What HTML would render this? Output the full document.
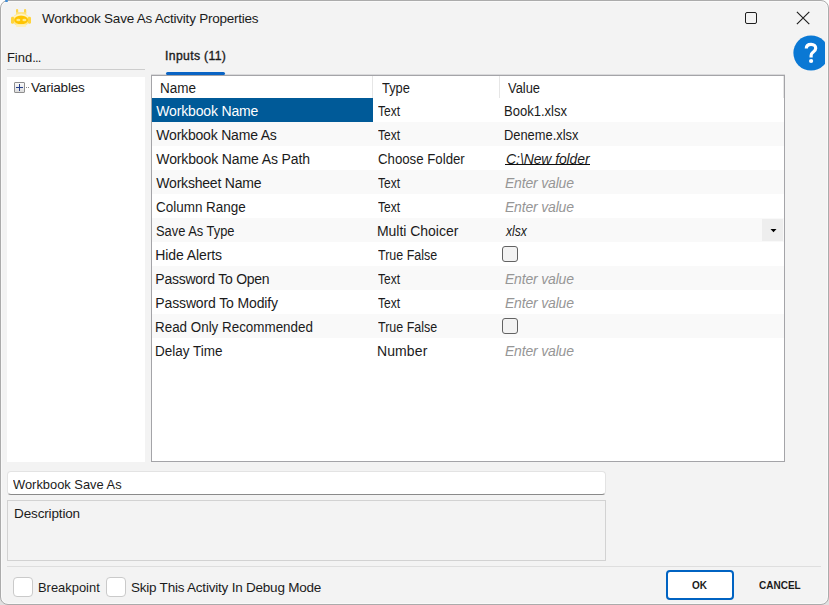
<!DOCTYPE html>
<html><head><meta charset="utf-8"><style>
html,body{margin:0;padding:0;}
body{width:829px;height:605px;position:relative;overflow:hidden;background:linear-gradient(#fdfdfd 50%,#e0e0e0 50%);font-family:"Liberation Sans", sans-serif;}
.win{position:absolute;left:0;top:0;width:827px;height:603px;border:1px solid #ababab;border-radius:8px;background:#f3f3f3;box-shadow:inset 0 0 0 1px #f9f9f9;overflow:hidden;}
.a{position:absolute;}
.t{position:absolute;white-space:pre;line-height:16px;font-family:"Liberation Sans", sans-serif;}
.row{position:absolute;left:152px;width:632px;height:24px;}
</style></head><body>
<div class="win"></div>
<div class="a" style="left:5px;top:0px;width:3px;height:2px;border-radius:1px;background:#3a8ad6"></div>
<!-- app icon -->
<svg class="a" style="left:10px;top:8px" width="22" height="21" viewBox="0 0 22 21">
  <rect x="6" y="1" width="2.2" height="5" rx="1.1" fill="#ffd64a"/>
  <rect x="14" y="1" width="2.2" height="5" rx="1.1" fill="#ffd64a"/>
  <rect x="6" y="4.2" width="10.2" height="2.6" fill="#ffe27a"/>
  <ellipse cx="11" cy="11.8" rx="8.6" ry="6.8" fill="#ffe685"/>
  <path d="M3.6 9.2 Q11 3.8 18.4 9.2" stroke="#fff4c4" stroke-width="1.3" fill="none"/>
  <rect x="1" y="8.8" width="3" height="7" rx="1.4" fill="#ffd43c"/>
  <rect x="18" y="8.8" width="3" height="7" rx="1.4" fill="#ffd43c"/>
  <ellipse cx="11.1" cy="12" rx="7" ry="4.3" fill="#ffc400"/>
  <ellipse cx="8.3" cy="12" rx="2" ry="1.3" fill="#ffea8c"/>
  <ellipse cx="14.4" cy="12" rx="2" ry="1.3" fill="#ffea8c"/>
  <rect x="6" y="16.2" width="10.2" height="2.8" rx="1" fill="#fff0b8"/>
</svg>
<!-- maximize -->
<div class="a" style="left:745px;top:12px;width:10px;height:10px;border:1.3px solid #1e1e1e;border-radius:2px;"></div>
<!-- close -->
<svg class="a" style="left:790px;top:5px" width="26" height="26" viewBox="0 0 26 26"><path d="M6.9 6.8 L19.3 19.2 M19.3 6.8 L6.9 19.2" stroke="#1e1e1e" stroke-width="1.15"/></svg>
<!-- help -->
<div class="a" style="left:793px;top:35px;width:32px;height:36px;overflow:hidden;">
<svg width="36" height="36" viewBox="0 0 36 36"><circle cx="18" cy="18" r="17.6" fill="#0a78d4"/>
<path d="M13.3 13.6 C13.3 10.6 15.4 9.3 18.1 9.3 C21 9.3 22.7 11.1 22.7 13.3 C22.7 15.6 21.1 16.5 19.7 17.5 C18.5 18.4 18.1 19.2 18.1 20.8 L18.1 22.4" stroke="#fff" stroke-width="3.2" fill="none"/>
<circle cx="18.1" cy="26" r="2.1" fill="#fff"/></svg></div>

<!-- left panel -->
<div class="a" style="left:7px;top:69px;width:138px;height:1px;background:#cdcdcd"></div>
<div class="a" style="left:7px;top:77px;width:138px;height:385px;background:#ffffff"></div>
<div class="a" style="left:14px;top:82px;width:9px;height:9px;border:1px solid #8f8f8f;border-radius:1px;background:linear-gradient(#fafafa,#dcdcdc)"></div>
<div class="a" style="left:16px;top:87px;width:7px;height:1px;background:#27408b"></div>
<div class="a" style="left:19px;top:84px;width:1px;height:7px;background:#27408b"></div>
<div class="a" style="left:26px;top:87px;width:1px;height:1px;background:#888"></div>
<div class="a" style="left:28px;top:87px;width:1px;height:1px;background:#888"></div>

<div class="a" style="left:151px;top:74px;width:634px;height:1px;background:#d9d9db"></div>
<!-- tab underline -->
<div class="a" style="left:166px;top:72px;width:59px;height:3px;border-radius:1.5px;background:#0a64c4"></div>

<!-- grid -->
<div class="a" style="left:151px;top:75px;width:632px;height:385px;border:1px solid #a4a4a8;background:#fff"></div>
<div class="a" style="left:372px;top:76px;width:1px;height:22px;background:#e6e6e6"></div>
<div class="a" style="left:499px;top:76px;width:1px;height:22px;background:#e6e6e6"></div>
<div class="a" style="left:783px;top:76px;width:1px;height:22px;background:#e6e6e6"></div>
<div class="row" style="top:98px;background:#ffffff"></div><div class="row" style="top:122px;background:#f9f9f9"></div><div class="row" style="top:146px;background:#ffffff"></div><div class="row" style="top:170px;background:#f9f9f9"></div><div class="row" style="top:194px;background:#ffffff"></div><div class="row" style="top:218px;background:#f9f9f9"></div><div class="row" style="top:242px;background:#ffffff"></div><div class="row" style="top:266px;background:#f9f9f9"></div><div class="row" style="top:290px;background:#ffffff"></div><div class="row" style="top:314px;background:#f9f9f9"></div><div class="row" style="top:338px;background:#ffffff"></div>
<div class="a" style="left:152px;top:98px;width:221px;height:24px;background:#005a98"></div>
<div class="a" style="left:762px;top:219px;width:21px;height:22px;background:#eeeeee"></div>
<div class="a" style="left:505px;top:164px;width:85px;height:1px;background:#111"></div>
<svg class="a" style="left:768px;top:226px" width="10" height="8" viewBox="0 0 10 8"><path d="M2.5 3 L8.5 3 L5.5 6.2 Z" fill="#000"/></svg>
<div class="a" style="left:502px;top:246px;width:14px;height:14px;border:1.2px solid #626262;border-radius:3px;background:#f3f3f3"></div>
<div class="a" style="left:502px;top:318px;width:14px;height:14px;border:1.2px solid #626262;border-radius:3px;background:#f3f3f3"></div>

<!-- bottom -->
<div class="a" style="left:7px;top:471px;width:597px;height:22px;border:1px solid #e3e3e3;border-bottom-color:#8a8a8a;border-radius:4px;background:#fff"></div>
<div class="a" style="left:7px;top:500px;width:597px;height:59px;border:1px solid #d2d2d2;"></div>
<div class="a" style="left:7px;top:566px;width:814px;height:1px;background:#dedede"></div>
<div class="a" style="left:13px;top:577px;width:18px;height:18px;border:1px solid #cacaca;border-radius:4px;background:#fff"></div>
<div class="a" style="left:106px;top:577px;width:18px;height:18px;border:1px solid #cacaca;border-radius:4px;background:#fff"></div>
<div class="a" style="left:666px;top:570px;width:64px;height:26px;border:2px solid #0063c2;border-radius:4px;background:#fff"></div>

<div class="t" id="t0" style="left:41.90px;top:10.61px;font-size:13.5px;font-weight:normal;font-style:normal;color:#1b1b1b;letter-spacing:-0.232px;">Workbook Save As Activity Properties</div><div class="t" id="t1" style="left:6.90px;top:50.14px;font-size:13px;font-weight:normal;font-style:normal;color:#1b1b1b;letter-spacing:0.000px;">Find<span style="letter-spacing:-0.8px">...</span></div><div class="t" id="t2" style="left:31.00px;top:79.61px;font-size:13.5px;font-weight:normal;font-style:normal;color:#1b1b1b;letter-spacing:-0.178px;">Variables</div><div class="t" id="t3" style="left:165.10px;top:47.57px;font-size:12.2px;font-weight:normal;font-style:normal;color:#1b1b1b;letter-spacing:0.336px;-webkit-text-stroke:0.35px #1b1b1b;">Inputs (11)</div><div class="t" id="t4" style="left:159.50px;top:79.98px;font-size:14px;font-weight:normal;font-style:normal;color:#1b1b1b;letter-spacing:0.000px;transform:scaleX(0.9658);transform-origin:0 0;">Name</div><div class="t" id="t5" style="left:381.50px;top:79.98px;font-size:14px;font-weight:normal;font-style:normal;color:#1b1b1b;letter-spacing:0.000px;transform:scaleX(0.9185);transform-origin:0 0;">Type</div><div class="t" id="t6" style="left:508.30px;top:79.98px;font-size:14px;font-weight:normal;font-style:normal;color:#1b1b1b;letter-spacing:0.000px;transform:scaleX(0.9212);transform-origin:0 0;">Value</div><div class="t" id="t7" style="left:156.30px;top:102.78px;font-size:14px;font-weight:normal;font-style:normal;color:#ffffff;letter-spacing:-0.158px;">Workbook Name</div><div class="t" id="t8" style="left:377.90px;top:102.78px;font-size:14px;font-weight:normal;font-style:normal;color:#1b1b1b;letter-spacing:0.000px;transform:scaleX(0.8608);transform-origin:0 0;">Text</div><div class="t" id="t9" style="left:504.10px;top:102.78px;font-size:14px;font-weight:normal;font-style:normal;color:#1b1b1b;letter-spacing:0.000px;transform:scaleX(0.9312);transform-origin:0 0;">Book1.xlsx</div><div class="t" id="t10" style="left:156.30px;top:126.78px;font-size:14px;font-weight:normal;font-style:normal;color:#1b1b1b;letter-spacing:-0.198px;">Workbook Name As</div><div class="t" id="t11" style="left:377.90px;top:126.78px;font-size:14px;font-weight:normal;font-style:normal;color:#1b1b1b;letter-spacing:0.000px;transform:scaleX(0.8555);transform-origin:0 0;">Text</div><div class="t" id="t12" style="left:504.10px;top:126.78px;font-size:14px;font-weight:normal;font-style:normal;color:#1b1b1b;letter-spacing:0.000px;transform:scaleX(0.9193);transform-origin:0 0;">Deneme.xlsx</div><div class="t" id="t13" style="left:156.30px;top:150.78px;font-size:14px;font-weight:normal;font-style:normal;color:#1b1b1b;letter-spacing:-0.124px;">Workbook Name As Path</div><div class="t" id="t14" style="left:377.90px;top:150.78px;font-size:14px;font-weight:normal;font-style:normal;color:#1b1b1b;letter-spacing:0.000px;transform:scaleX(0.9449);transform-origin:0 0;">Choose Folder</div><div class="t" id="t15" style="left:506.10px;top:150.78px;font-size:14px;font-weight:normal;font-style:italic;color:#1b1b1b;letter-spacing:-0.106px;">C:\New folder</div><div class="t" id="t16" style="left:156.30px;top:174.78px;font-size:14px;font-weight:normal;font-style:normal;color:#1b1b1b;letter-spacing:-0.205px;">Worksheet Name</div><div class="t" id="t17" style="left:377.90px;top:174.78px;font-size:14px;font-weight:normal;font-style:normal;color:#1b1b1b;letter-spacing:0.000px;transform:scaleX(0.8555);transform-origin:0 0;">Text</div><div class="t" id="t18" style="left:504.90px;top:174.78px;font-size:14px;font-weight:normal;font-style:italic;color:#969696;letter-spacing:-0.170px;">Enter value</div><div class="t" id="t19" style="left:156.30px;top:198.78px;font-size:14px;font-weight:normal;font-style:normal;color:#1b1b1b;letter-spacing:0.000px;transform:scaleX(0.9615);transform-origin:0 0;">Column Range</div><div class="t" id="t20" style="left:377.90px;top:198.78px;font-size:14px;font-weight:normal;font-style:normal;color:#1b1b1b;letter-spacing:0.000px;transform:scaleX(0.8608);transform-origin:0 0;">Text</div><div class="t" id="t21" style="left:504.90px;top:198.78px;font-size:14px;font-weight:normal;font-style:italic;color:#969696;letter-spacing:-0.170px;">Enter value</div><div class="t" id="t22" style="left:156.30px;top:222.78px;font-size:14px;font-weight:normal;font-style:normal;color:#1b1b1b;letter-spacing:0.000px;transform:scaleX(0.9198);transform-origin:0 0;">Save As Type</div><div class="t" id="t23" style="left:376.90px;top:222.78px;font-size:14px;font-weight:normal;font-style:normal;color:#1b1b1b;letter-spacing:-0.021px;">Multi Choicer</div><div class="t" id="t24" style="left:505.90px;top:222.78px;font-size:14px;font-weight:normal;font-style:italic;color:#1b1b1b;letter-spacing:0.000px;transform:scaleX(0.8691);transform-origin:0 0;">xlsx</div><div class="t" id="t25" style="left:155.30px;top:246.78px;font-size:14px;font-weight:normal;font-style:normal;color:#1b1b1b;letter-spacing:-0.087px;">Hide Alerts</div><div class="t" id="t26" style="left:377.90px;top:246.78px;font-size:14px;font-weight:normal;font-style:normal;color:#1b1b1b;letter-spacing:0.000px;transform:scaleX(0.8912);transform-origin:0 0;">True False</div><div class="t" id="t27" style="left:155.30px;top:270.78px;font-size:14px;font-weight:normal;font-style:normal;color:#1b1b1b;letter-spacing:-0.246px;">Password To Open</div><div class="t" id="t28" style="left:377.90px;top:270.78px;font-size:14px;font-weight:normal;font-style:normal;color:#1b1b1b;letter-spacing:0.000px;transform:scaleX(0.8555);transform-origin:0 0;">Text</div><div class="t" id="t29" style="left:504.90px;top:270.78px;font-size:14px;font-weight:normal;font-style:italic;color:#969696;letter-spacing:-0.170px;">Enter value</div><div class="t" id="t30" style="left:155.30px;top:294.78px;font-size:14px;font-weight:normal;font-style:normal;color:#1b1b1b;letter-spacing:-0.133px;">Password To Modify</div><div class="t" id="t31" style="left:377.90px;top:294.78px;font-size:14px;font-weight:normal;font-style:normal;color:#1b1b1b;letter-spacing:0.000px;transform:scaleX(0.8608);transform-origin:0 0;">Text</div><div class="t" id="t32" style="left:504.90px;top:294.78px;font-size:14px;font-weight:normal;font-style:italic;color:#969696;letter-spacing:-0.170px;">Enter value</div><div class="t" id="t33" style="left:155.30px;top:318.78px;font-size:14px;font-weight:normal;font-style:normal;color:#1b1b1b;letter-spacing:0.000px;transform:scaleX(0.9571);transform-origin:0 0;">Read Only Recommended</div><div class="t" id="t34" style="left:377.90px;top:318.78px;font-size:14px;font-weight:normal;font-style:normal;color:#1b1b1b;letter-spacing:0.000px;transform:scaleX(0.8912);transform-origin:0 0;">True False</div><div class="t" id="t35" style="left:155.30px;top:342.78px;font-size:14px;font-weight:normal;font-style:normal;color:#1b1b1b;letter-spacing:0.000px;transform:scaleX(0.9636);transform-origin:0 0;">Delay Time</div><div class="t" id="t36" style="left:376.90px;top:342.78px;font-size:14px;font-weight:normal;font-style:normal;color:#1b1b1b;letter-spacing:0.139px;">Number</div><div class="t" id="t37" style="left:504.90px;top:342.78px;font-size:14px;font-weight:normal;font-style:italic;color:#969696;letter-spacing:-0.170px;">Enter value</div><div class="t" id="t38" style="left:12.70px;top:476.61px;font-size:13.5px;font-weight:normal;font-style:normal;color:#1b1b1b;letter-spacing:0.000px;transform:scaleX(0.9545);transform-origin:0 0;">Workbook Save As</div><div class="t" id="t39" style="left:14.10px;top:505.61px;font-size:13.5px;font-weight:normal;font-style:normal;color:#1b1b1b;letter-spacing:-0.151px;">Description</div><div class="t" id="t40" style="left:37.70px;top:579.61px;font-size:13.5px;font-weight:normal;font-style:normal;color:#1b1b1b;letter-spacing:0.000px;transform:scaleX(0.9569);transform-origin:0 0;">Breakpoint</div><div class="t" id="t41" style="left:130.90px;top:579.61px;font-size:13.5px;font-weight:normal;font-style:normal;color:#1b1b1b;letter-spacing:-0.213px;">Skip This Activity In Debug Mode</div><div class="t" id="t42" style="left:691.50px;top:576.93px;font-size:11.5px;font-weight:bold;font-style:normal;color:#1b1b1b;letter-spacing:0.000px;transform:scaleX(0.8700);transform-origin:0 0;">OK</div><div class="t" id="t43" style="left:758.50px;top:576.93px;font-size:11.5px;font-weight:bold;font-style:normal;color:#1b1b1b;letter-spacing:0.000px;transform:scaleX(0.8700);transform-origin:0 0;">CANCEL</div>
</body></html>
